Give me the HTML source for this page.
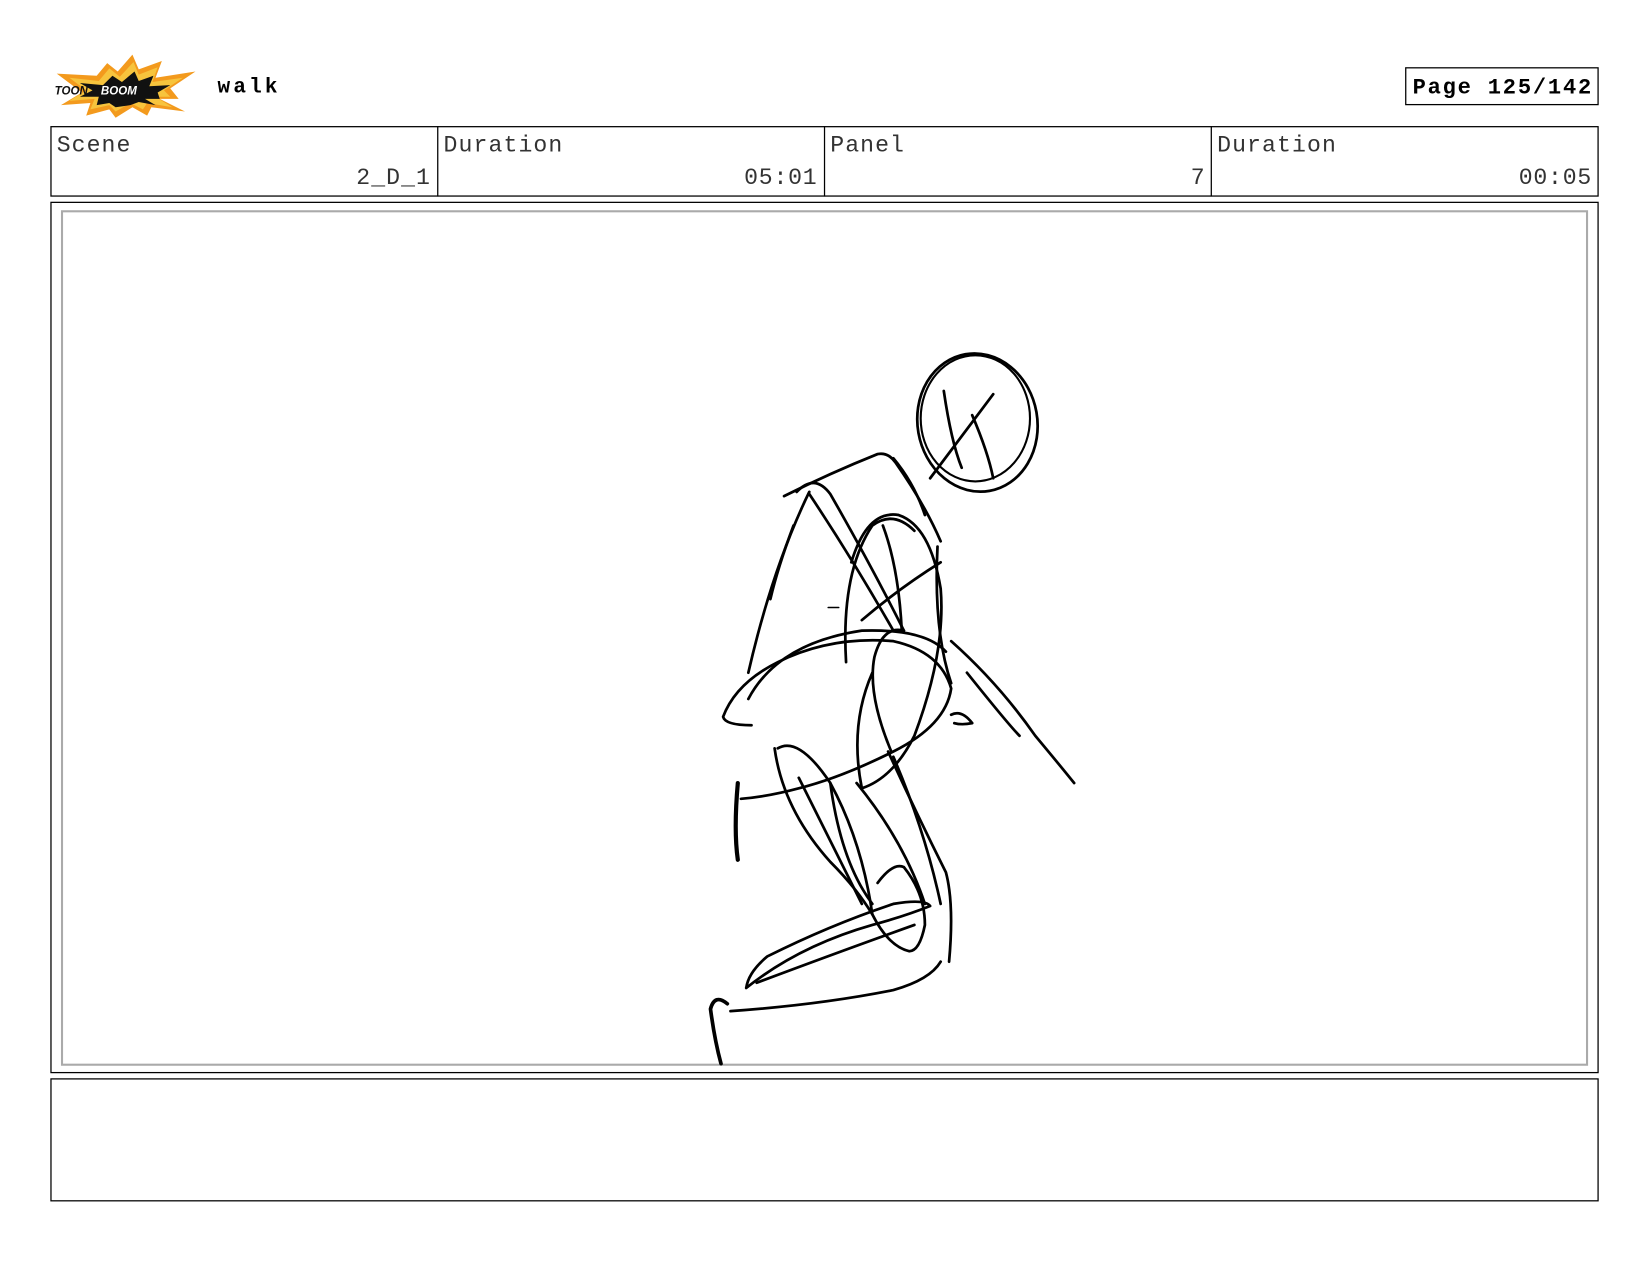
<!DOCTYPE html>
<html><head><meta charset="utf-8"><style>
html,body{margin:0;padding:0;background:#fff;width:1648px;height:1276px;overflow:hidden}
svg{display:block}
</style></head><body>
<svg width="1648" height="1276" viewBox="0 0 1568 1214" xmlns="http://www.w3.org/2000/svg">
<rect width="1568" height="1214" fill="#fff"/>
<g transform="translate(52,50)">
<polygon points="2,20 40,22 50,10 60,18 74,2 80,16 102,8 96,24 134,18 110,34 118,44 100,44 124,56 92,52 88,60 74,52 58,62 52,54 30,60 34,48 6,50 26,38" fill="#f39a1d"/>
<polygon points="14,24 42,27 52,15 62,23 75,9 80,21 98,14 93,28 122,24 104,36 110,42 96,42 112,52 88,48 84,54 72,48 58,56 52,50 34,54 38,44 14,46 30,36" fill="#f7c43d"/>
<polygon points="24,29 46,31 55,22 64,28 76,18 80,27 94,22 90,32 110,31 98,38 100,44 86,44 96,50 80,47 72,50 58,52 52,48 40,50 42,42 24,42 36,36" fill="#111"/>
<text x="0" y="40" font-family="Liberation Sans,sans-serif" font-weight="bold" font-style="italic" font-size="11" fill="#111">TOON</text>
<text x="44" y="40" font-family="Liberation Sans,sans-serif" font-weight="bold" font-style="italic" font-size="11" fill="#fff">BOOM</text>
</g>
<text x="207" y="88" font-family="Liberation Mono,monospace" font-weight="bold" font-size="20" textLength="57">walk</text>
<rect x="1337.5" y="64.5" width="183" height="35" fill="none" stroke="#000" stroke-width="1.2"/>
<text x="1344" y="89" font-family="Liberation Mono,monospace" font-weight="bold" font-size="21" textLength="170">Page 125/142</text>
<rect x="48.5" y="120.5" width="1472" height="66" fill="none" stroke="#000" stroke-width="1.2"/>
<line x1="416.5" y1="120" x2="416.5" y2="187" stroke="#000" stroke-width="1.2"/>
<line x1="784.5" y1="120" x2="784.5" y2="187" stroke="#000" stroke-width="1.2"/>
<line x1="1152.5" y1="120" x2="1152.5" y2="187" stroke="#000" stroke-width="1.2"/>
<g font-family="Liberation Mono,monospace" font-size="22" fill="#333">
<text x="54" y="144" textLength="70">Scene</text>
<text x="422" y="144" textLength="113">Duration</text>
<text x="790" y="144" textLength="70">Panel</text>
<text x="1158" y="144" textLength="113">Duration</text>
<text x="339" y="175" textLength="70">2_D_1</text>
<text x="708" y="175" textLength="69">05:01</text>
<text x="1133" y="175" textLength="13">7</text>
<text x="1445" y="175" textLength="69">00:05</text>
</g>
<rect x="48.5" y="192.5" width="1472" height="828" fill="none" stroke="#000" stroke-width="1.2"/>
<rect x="59" y="201" width="1451" height="812" fill="none" stroke="#aaa" stroke-width="2"/>
<rect x="48.5" y="1026.5" width="1472" height="116" fill="none" stroke="#000" stroke-width="1.2"/>
<g fill="none" stroke="#000" stroke-width="2.6" stroke-linecap="round" stroke-linejoin="round">
<ellipse cx="930" cy="402" rx="57" ry="66" transform="rotate(-10 930 402)"/>
<ellipse cx="928" cy="398" rx="52" ry="60" stroke-width="2"/>
<path d="M898 372 Q905 420 915 445"/>
<path d="M945 375 Q915 415 885 455"/>
<path d="M925 395 Q940 430 945 455"/>
<path d="M746 472 Q790 450 835 432 Q845 430 852 440 Q880 480 895 515"/>
<path d="M758 468 Q775 450 790 470 Q830 540 860 600"/>
<path d="M770 470 Q810 530 850 600"/>
<path d="M770 468 Q735 540 712 640"/>
<path d="M755 500 Q740 540 733 570"/>
<path d="M850 436 Q870 460 880 490"/>
<path d="M810 535 Q825 485 855 490 Q885 500 895 560 Q900 620 870 700 Q850 740 820 750"/>
<path d="M805 630 Q800 545 830 500 Q850 485 870 505"/>
<path d="M840 500 Q855 540 858 600"/>
<path d="M820 590 Q855 560 895 535"/>
<path d="M892 520 Q888 600 905 650"/>
<path d="M715 690 Q690 690 688 682 Q700 650 740 630 Q790 605 850 610 Q895 620 905 655 Q900 690 850 715 Q800 740 760 750 Q730 758 705 760"/>
<path d="M712 665 Q740 612 820 600 Q880 598 900 620"/>
<path d="M848 715 Q825 660 832 625 Q840 595 860 600"/>
<path d="M820 750 Q808 690 830 640"/>
<path d="M905 610 Q950 650 985 700 Q1010 730 1022 745"/>
<path d="M920 640 Q960 690 970 700"/>
<path d="M905 680 Q915 675 925 688 Q915 690 908 688"/>
<path d="M702 745 Q698 790 702 818" stroke-width="4"/>
<path d="M737 712 Q745 770 790 820 Q815 845 830 870 Q820 800 790 745 Q760 700 740 712"/>
<path d="M760 740 Q790 800 820 860"/>
<path d="M790 745 Q800 820 830 860"/>
<path d="M815 745 Q860 800 880 860"/>
<path d="M845 715 Q870 770 900 830 Q908 860 903 915"/>
<path d="M850 720 Q880 790 895 860"/>
<path d="M835 840 Q850 820 860 825 Q880 850 880 880 Q875 905 865 905 Q845 900 830 870"/>
<path d="M710 940 Q760 900 830 880 Q860 872 885 862 Q880 855 850 860 Q790 880 730 910 Q712 925 710 940"/>
<path d="M720 935 Q800 905 870 880"/>
<path d="M695 962 Q780 956 850 942 Q885 932 895 915"/>
<path d="M686 1012 Q680 990 676 960 Q680 945 692 955" stroke-width="3.5"/>
<path d="M788 578 L798 578" stroke-width="1.5"/>
</g>
</svg>
</body></html>
